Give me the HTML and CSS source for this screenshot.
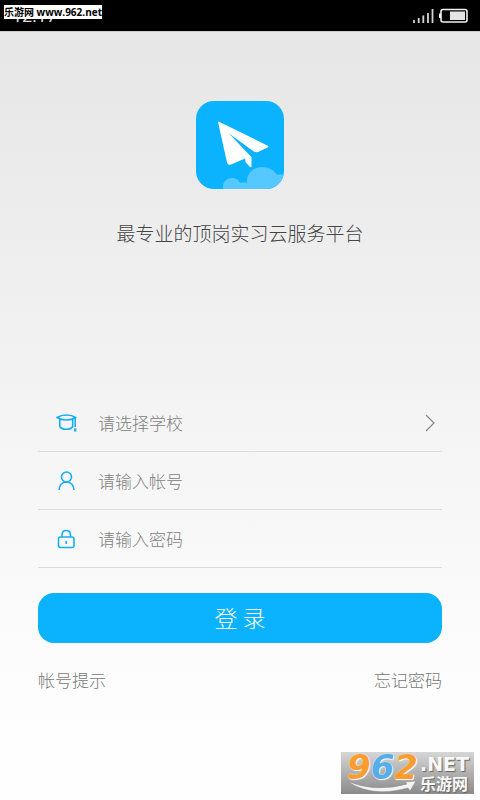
FILE: index.html
```html
<!DOCTYPE html>
<html lang="zh-CN">
<head>
<meta charset="utf-8">
<meta name="viewport" content="width=device-width, initial-scale=1">
<title>登录</title>
<link rel="stylesheet" href="styles.css">
</head>
<body>
<header class="status">
  <span class="clock">12:17</span>
  <span class="site-tag">乐游网 www.962.net</span>
  <svg class="status-icons" width="58" height="18" viewBox="0 0 58 18" aria-hidden="true">
    <path d="M4 13v3M8.700 11v5M13.300 8.500v7.500M18 6v10M22.500 2v14" fill="none" stroke="#d4d4d4" stroke-width="1.800"/>
    <rect x="31" y="2.500" width="26" height="12.500" rx="2" fill="none" stroke="#f2f2f2" stroke-width="1.600"/>
    <path d="M30 6.500v4.500" stroke="#f2f2f2" stroke-width="2"/>
    <rect x="40" y="4.500" width="15" height="8.500" fill="#e4e4e4"/>
  </svg>
</header>
<main class="login">
  <svg class="logo" width="88" height="88" viewBox="0 0 88 88" role="img" aria-label="纸飞机">
    <defs><clipPath id="tile"><rect width="88" height="88" rx="18"/></clipPath></defs>
    <g clip-path="url(#tile)">
      <rect width="88" height="88" fill="#0bb2fd"/>
      <path d="M27 88C26 81 31 77 36 77C40 77 43 79 44 82C46 81 49 81 51 82C50 73 57 66 66 66C73 66 78 69 81 74C84 73 86 73 88 74V88Z" fill="#54c8ff"/>
    </g>
    <path d="M22 21Q21.500 20 23.500 21L71.500 44.500Q73 45.500 71.500 46.500L62 51Q59.500 51.500 57 50L33 32.500L52 52.500L55.500 56V65.500Q55 67 53.500 65.500L49.500 61L49 57.500L35 63.500Q31.500 64.500 31 61.500Z" fill="#fff"/>
  </svg>
  <h1 class="slogan">最专业的顶岗实习云服务平台</h1>
  <form class="form">
    <div class="row">
      <svg class="icon" width="22" height="22" viewBox="0 0 22 22" aria-hidden="true">
        <path d="M1 5.500Q5 3 10.500 3Q16 3 19.500 5.500Q16 8 10.500 8Q5 8 1 5.500ZM3.800 7.500V14.500Q5.500 17.300 10.500 17.300Q15 17.300 16.700 14.500V7.500M19.200 6V15"/>
        <path d="M19.200 16.500v3" stroke-width="2.500"/>
      </svg>
      <select class="field" aria-label="学校"><option>请选择学校</option></select>
      <svg class="chevron" width="12" height="18" viewBox="0 0 12 18" aria-hidden="true"><path d="M2 1L10 9L2 17"/></svg>
    </div>
    <div class="row">
      <svg class="icon" width="22" height="22" viewBox="0 0 22 22" aria-hidden="true">
        <circle cx="10.500" cy="7" r="5"/><path d="M3 20Q3.500 12.500 10.500 12Q17.500 12.500 18 20"/>
      </svg>
      <input class="field" type="text" aria-label="帐号" placeholder="请输入帐号">
    </div>
    <div class="row">
      <svg class="icon" width="22" height="22" viewBox="0 0 22 22" aria-hidden="true">
        <rect x="2.500" y="9" width="15.500" height="10.500" rx="2"/><path d="M6 9V7Q6 2.500 10.200 2.500Q14.500 2.500 14.500 7V9M10.200 13v3"/>
      </svg>
      <input class="field" type="password" aria-label="密码" placeholder="请输入密码">
    </div>
    <button class="submit" type="submit">登 录</button>
    <nav class="links">
      <a href="#hint">帐号提示</a>
      <a href="#forgot">忘记密码</a>
    </nav>
  </form>
</main>
<aside class="watermark">
  <svg class="swoosh" width="80" height="16" viewBox="0 0 80 16" aria-hidden="true"><path d="M6 3Q34 15 66 6L64 4L75 3L69 13L67 10Q30 20 6 3Z" fill="#f4f4f4" stroke="#888" stroke-width=".5"/></svg>
  <span class="digits">9<span class="blue">6</span>2</span>
  <span class="suffix"><span class="net">.NET</span><span class="name">乐游网</span></span>
</aside>
</body>
</html>
```
FILE: styles.css
```css
* {
  box-sizing: border-box;
}

body {
  margin: 0;
  min-height: 100vh;
  position: relative;
  background: linear-gradient(#e5e5e5, #f4f4f4 52%, #fdfdfd 85%, #fefefe);
  color: #444;
  font-family: "Noto Sans CJK SC", sans-serif;
  font-weight: 300;
}

.status {
  position: relative;
  display: flex;
  align-items: center;
  justify-content: space-between;
  height: 32px;
  padding: 0 12px;
  background: #000;
  border-bottom: 1px solid #cfc6cc;
}

.clock {
  color: #ddd;
  font: 18px/20px Roboto, sans-serif;
}

.site-tag {
  position: absolute;
  left: 4px;
  top: 5px;
  width: 98px;
  height: 14px;
  background: #fff;
  color: #000;
  font: 700 10px/15px "Open Sans", "Noto Sans CJK SC", sans-serif;
  text-align: center;
  white-space: nowrap;
}

.login {
  display: flex;
  flex-direction: column;
  align-items: center;
  padding: 69px 38px 0;
}

.logo {
  display: block;
}

.slogan {
  margin: 30px 0 0;
  font-size: 19px;
  font-weight: 300;
  line-height: 28px;
}

.form {
  width: 100%;
  margin-top: 147px;
}

.row {
  display: flex;
  align-items: center;
  height: 58px;
  padding: 0 6px 0 18px;
  border-bottom: 1px solid #dcdcdc;
}

.icon,
.chevron {
  flex: none;
  fill: none;
  stroke: #17aff0;
  stroke-width: 1.6;
}

.chevron {
  stroke: #888;
  stroke-width: 1.2;
}

.field {
  flex: 1;
  min-width: 0;
  height: 40px;
  margin: 0 0 0 20px;
  padding: 0;
  border: 0;
  outline: 0;
  appearance: none;
  background: transparent;
  color: #808080;
  font: inherit;
  font-size: 17px;
}

.field::placeholder {
  color: #808080;
  opacity: 1;
}

.submit {
  display: block;
  width: 100%;
  height: 50px;
  margin: 25px 0 0;
  padding: 0 0 2px;
  border: 0;
  border-radius: 16px;
  background: #0bb2fd;
  color: #fff;
  font: inherit;
  font-size: 23px;
}

.links {
  display: flex;
  justify-content: space-between;
  margin-top: 23px;
  line-height: 28px;
  font-size: 17px;
}

.links a {
  color: #777;
  text-decoration: none;
}

.watermark {
  position: absolute;
  right: 6px;
  bottom: 6px;
  display: flex;
  width: 133px;
  height: 42px;
  padding-left: 6px;
  background: linear-gradient(#d6d6d6, #8b8b8b);
}

.digits {
  width: 73px;
  color: #fa9d2e;
  font: italic 700 34px/30px "DejaVu Sans", sans-serif;
  text-shadow: 0 0 1px #fff, 1px 1px 1px #fff;
}

.blue {
  color: #55aee8;
}

.swoosh {
  position: absolute;
  left: 0;
  bottom: 0;
}

.suffix {
  display: flex;
  flex-direction: column;
  color: #f8f8f8;
  text-shadow: 1px 1px 1px #666;
  white-space: nowrap;
}

.net {
  padding-top: 2px;
  font: 700 19px/20px "DejaVu Sans", sans-serif;
}

.name {
  font-size: 16px;
  font-weight: 700;
  line-height: 18px;
}
```
